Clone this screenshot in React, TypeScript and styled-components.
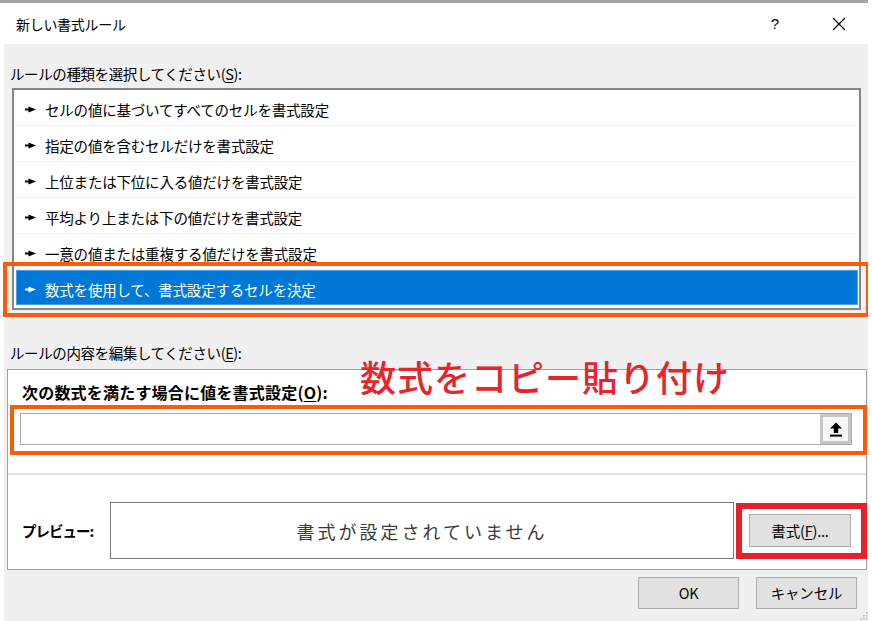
import styled, { createGlobalStyle } from "styled-components";

const GlobalStyle = createGlobalStyle`
    html, body {
        margin: 0;
        padding: 0;
        background: #ffffff;
    }
    body {
        font-family: "Noto Sans CJK JP", "Noto Sans", sans-serif;
        color: #000;
    }
    u {
        text-underline-offset: 2px;
    }
`;

const Dialog = styled.div`
    width: 868px;
    height: 621px;
    border-top: 3px solid #a3a3a3;
    box-sizing: border-box;
    display: flex;
    flex-direction: column;
    overflow: hidden;
`;

const TitleBar = styled.div`
    height: 41px;
    display: flex;
    align-items: center;
    justify-content: space-between;
    padding: 0 22px 0 16px;
    background: #ffffff;
`;

const Title = styled.span`
    font-size: 14px;
    line-height: 20px;
    letter-spacing: -0.3px;
`;

const TitleButtons = styled.div`
    display: flex;
    align-items: center;
    gap: 53px;
`;

const HelpMark = styled.span`
    font-family: "Liberation Sans", sans-serif;
    font-size: 15px;
    line-height: 20px;
`;

const Body = styled.div`
    flex: 1;
    margin-left: 4px;
    background: #f0f0f0;
    display: flex;
    flex-direction: column;
    position: relative;
`;

const SectionLabel = styled.div<{ $top: number }>`
    margin: ${(p) => p.$top}px 0 0 6px;
    font-size: 14.5px;
    line-height: 20px;
    letter-spacing: -0.4px;
`;

const RuleList = styled.ul`
    list-style: none;
    margin: 4px 7px 0 8px;
    padding: 0 0 3px;
    background: #ffffff;
    border: 2px solid #858585;
`;

const RuleRow = styled.li<{ $selected?: boolean }>`
    position: relative;
    height: 36px;
    margin: 0 1px 0 2px;
    padding: 3px 0 0 9px;
    box-sizing: border-box;
    display: flex;
    align-items: center;
    gap: 9px;
    font-size: 14.5px;
    letter-spacing: -0.2px;
    border-bottom: 1px solid #f0f0f0;
    color: ${(p) => (p.$selected ? "#ffffff" : "#000000")};
    background: ${(p) => (p.$selected ? "#0078d7" : "transparent")};
    box-shadow: ${(p) => (p.$selected ? "inset 0 0 0 1px #4c9fe3" : "none")};
    &:last-child {
        border-bottom: none;
        height: 35px;
    }
`;

const Mark = styled.span<{ $inset: string; $color: string; $width: number }>`
    position: absolute;
    inset: ${(p) => p.$inset};
    border: ${(p) => p.$width}px solid ${(p) => p.$color};
    pointer-events: none;
`;

const Marked = styled.div<{ $top?: number }>`
    position: relative;
    margin-top: ${(p) => p.$top ?? 0}px;
`;

const Pointer = ({ color }: { color: string }) => (
    <svg width="11" height="7" viewBox="0 0 11 7" style={{ flex: "none" }}>
        <rect x="0" y="2.5" width="6" height="2" fill={color} />
        <path d="M3.5 0.5 L11 3.5 L3.5 6.5 Z" fill={color} />
    </svg>
);

const EditPanel = styled.div`
    position: relative;
    margin: 6px 1px 0 3px;
    padding: 12px 14px 10px 12px;
    background: #ffffff;
    border: 1px solid #a0a0a0;
    display: flex;
    flex-direction: column;
`;

const BoldLabel = styled.div`
    margin-left: 2px;
    font-size: 16px;
    font-weight: 700;
    line-height: 20px;
    letter-spacing: 0.2px;
`;

const Annotation = styled.div`
    position: absolute;
    top: -12px;
    left: 352px;
    font-size: 36px;
    line-height: 36px;
    font-weight: 500;
    letter-spacing: 1px;
    color: #e8232b;
    white-space: nowrap;
`;

const FormulaField = styled.div`
    height: 32px;
    box-sizing: border-box;
    border: 1px solid #ababab;
    background: #ffffff;
    display: flex;
    justify-content: flex-end;
`;

const CollapseButton = styled.button`
    width: 31px;
    height: 30px;
    padding: 0;
    box-sizing: border-box;
    border: 3px solid #c6c6c6;
    background: #f6f6f6;
    display: flex;
    align-items: center;
    justify-content: center;
`;

const Divider = styled.div`
    margin: 28px -14px 0 -12px;
    height: 2px;
    background: #e2e2e2;
`;

const PreviewRow = styled.div`
    margin-top: 27px;
    display: flex;
    align-items: center;
`;

const PreviewLabel = styled.div`
    width: 88px;
    margin-left: 2px;
    font-size: 14.5px;
    font-weight: 700;
    line-height: 20px;
    letter-spacing: -1px;
`;

const PreviewBox = styled.div`
    flex: 1;
    height: 57px;
    box-sizing: border-box;
    border: 1px solid #7a7a7a;
    display: flex;
    align-items: center;
    justify-content: center;
    font-size: 18px;
    letter-spacing: 3px;
    color: #3a3a3a;
`;

const PushButton = styled.button<{ $width: number; $height: number }>`
    width: ${(p) => p.$width}px;
    height: ${(p) => p.$height}px;
    box-sizing: border-box;
    padding: 0;
    border: 1px solid #adadad;
    background: #e1e1e1;
    font-family: "Noto Sans CJK JP", "Noto Sans", sans-serif;
    font-size: 14.5px;
    line-height: 20px;
    color: #000;
    letter-spacing: -0.2px;
`;

const FormatSlot = styled(Marked)`
    margin: 0 1px 0 15px;
    display: flex;
`;

const Footer = styled.div`
    margin-top: 7px;
    padding-right: 11px;
    display: flex;
    justify-content: flex-end;
    gap: 17px;
`;

const Grip = styled.svg`
    position: absolute;
    right: 0;
    bottom: 1px;
`;

const rules = [
    "セルの値に基づいてすべてのセルを書式設定",
    "指定の値を含むセルだけを書式設定",
    "上位または下位に入る値だけを書式設定",
    "平均より上または下の値だけを書式設定",
    "一意の値または重複する値だけを書式設定",
    "数式を使用して、書式設定するセルを決定",
];

export default function App() {
    const selected = rules.length - 1;

    return (
        <>
            <GlobalStyle />
            <Dialog>
                <TitleBar>
                    <Title>新しい書式ルール</Title>
                    <TitleButtons>
                        <HelpMark>?</HelpMark>
                        <svg width="14" height="14" viewBox="0 0 14 14">
                            <path d="M1 1 L13 13 M13 1 L1 13" stroke="#000" strokeWidth="1.2" />
                        </svg>
                    </TitleButtons>
                </TitleBar>
                <Body>
                    <SectionLabel $top={20}>
                        ルールの種類を選択してください(<u>S</u>):
                    </SectionLabel>
                    <RuleList>
                        {rules.map((rule, i) => (
                            <RuleRow key={rule} $selected={i === selected}>
                                <Pointer color={i === selected ? "#ffffff" : "#000000"} />
                                {rule}
                                {i === selected && (
                                    <Mark $inset="-8px -12px -12px -13px" $color="#fe5a0c" $width={4} />
                                )}
                            </RuleRow>
                        ))}
                    </RuleList>

                    <SectionLabel $top={33}>
                        ルールの内容を編集してください(<u>E</u>):
                    </SectionLabel>
                    <EditPanel>
                        <BoldLabel>
                            次の数式を満たす場合に値を書式設定(<u>O</u>):
                        </BoldLabel>
                        <Annotation>数式をコピー貼り付け</Annotation>
                        <Marked $top={11}>
                            <FormulaField>
                                <CollapseButton>
                                    <svg width="14" height="15" viewBox="0 0 14 15">
                                        <path d="M7 0.5 L13 6.5 L9.2 6.5 L9.2 11 L4.8 11 L4.8 6.5 L1 6.5 Z" fill="#000" />
                                        <rect x="1" y="12.6" width="12" height="2" fill="#000" />
                                    </svg>
                                </CollapseButton>
                            </FormulaField>
                            <Mark $inset="-8px -15px -10px -10px" $color="#fe5a0c" $width={4} />
                        </Marked>
                        <Divider />
                        <PreviewRow>
                            <PreviewLabel>プレビュー:</PreviewLabel>
                            <PreviewBox>書式が設定されていません</PreviewBox>
                            <FormatSlot>
                                <PushButton $width={102} $height={33}>
                                    書式(<u>F</u>)...
                                </PushButton>
                                <Mark $inset="-11px -16px -12px -13px" $color="#e8202a" $width={6} />
                            </FormatSlot>
                        </PreviewRow>
                    </EditPanel>

                    <Footer>
                        <PushButton $width={101} $height={32}>OK</PushButton>
                        <PushButton $width={101} $height={32}>キャンセル</PushButton>
                    </Footer>
                    <Grip width="10" height="10" viewBox="0 0 10 10">
                        {[
                            [8, 0], [8, 3], [5, 3], [8, 6], [5, 6], [2, 6],
                        ].map(([x, y]) => (
                            <rect key={`${x}-${y}`} x={x} y={y + 2} width="1.6" height="1.6" fill="#b8b8b8" />
                        ))}
                    </Grip>
                </Body>
            </Dialog>
        </>
    );
}
